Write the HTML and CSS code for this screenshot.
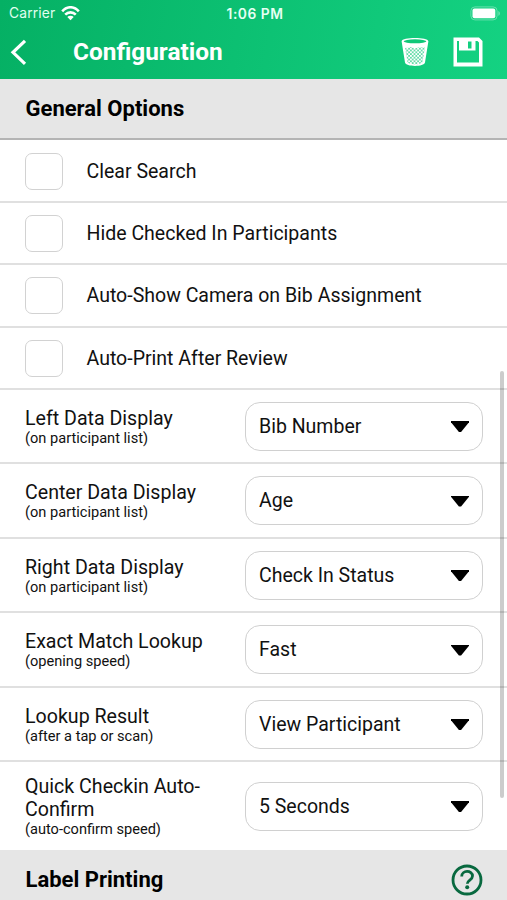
FILE: index.html
```html
<!DOCTYPE html>
<html lang="en">
<head>
<meta charset="utf-8">
<title>Configuration</title>
<link rel="stylesheet" href="styles.css">
</head>
<body>
<div class="screen">
  <header class="header">
    <div class="status">
      <div class="carrier"><span>Carrier</span>
        <svg width="19" height="15" viewBox="0 0 19 15" fill="none" stroke="#fff" stroke-width="2.6"><path d="M1.200 5.300C6-.1 13-.1 17.800 5.300M4.200 8.700c3-3.100 7.600-3.100 10.600 0"/><path d="M9.500 14.200 6.300 10.900c1.700-1.500 4.700-1.500 6.400 0z" fill="#fff" stroke="none"/></svg>
      </div>
      <span class="time">1:06 PM</span>
      <div class="battery">
        <svg width="31" height="15" viewBox="0 0 31 15"><rect x=".9" y=".9" width="26.200" height="13" rx="4" fill="none" stroke="#fff" stroke-opacity=".35"/><rect x="2.500" y="2.500" width="22.800" height="9.800" rx="2" fill="#fff"/><path d="M28.400 5v4.800c2-.8 2-4 0-4.800z" fill="#fff" fill-opacity=".4"/></svg>
      </div>
    </div>
    <div class="nav">
      <svg class="back" width="18" height="28" viewBox="0 0 18 28" fill="none" stroke="#fff" stroke-width="3.200"><path d="M16 1.800 4 13.300l12 11.500"/></svg>
      <h1>Configuration</h1>
      <svg class="trash" width="28" height="30" viewBox="0 0 28 30">
        <defs><pattern id="mesh" width="3.600" height="3.600" patternUnits="userSpaceOnUse"><rect width="3.600" height="3.600" fill="#fff"/><path d="M.9 0 1.800.9.9 1.800 0 .9zM2.700 1.800l.9.9-.9.9-.9-.9z" fill="#0fc878" stroke="#0fc878" stroke-width=".25"/></pattern></defs>
        <path d="M.6 4.200C1-.1 27-.1 27.400 4.200L24 25.500c-.7 4.500-19.300 4.500-20 0z" fill="#fff"/>
        <ellipse cx="14" cy="4.300" rx="11.400" ry="2" fill="#0fc878"/>
        <path d="M4 10.500c2.500 1 4 0 5-.5 4 1.500 7 1.500 10 0 2 .6 3.500.7 5 .2l-2.500 15c-3.500 2.700-11.500 2.700-15 0z" fill="url(#mesh)"/>
      </svg>
      <svg class="save" width="30" height="30" viewBox="0 0 30 30"><path fill="#fff" fill-rule="evenodd" d="M.5.500h25.500l3.500 3.500v25.500H.5zM4 4v21.500h22V5.500L24.500 4H22.500v9.500H6V4zM15 4.500v7h3.500v-7z"/></svg>
    </div>
  </header>
  <main>
    <div class="section"><h2>General Options</h2></div>
    <label class="check first"><input type="checkbox"><span>Clear Search</span></label>
    <label class="check"><input type="checkbox"><span>Hide Checked In Participants</span></label>
    <label class="check"><input type="checkbox"><span>Auto-Show Camera on Bib Assignment</span></label>
    <label class="check"><input type="checkbox"><span>Auto-Print After Review</span></label>
    <div class="option"><div class="label">Left Data Display<small>(on participant list)</small></div><button class="select"><span>Bib Number</span><i class="arrow"></i></button></div>
    <div class="option"><div class="label">Center Data Display<small>(on participant list)</small></div><button class="select"><span>Age</span><i class="arrow"></i></button></div>
    <div class="option"><div class="label">Right Data Display<small>(on participant list)</small></div><button class="select"><span>Check In Status</span><i class="arrow"></i></button></div>
    <div class="option"><div class="label">Exact Match Lookup<small>(opening speed)</small></div><button class="select"><span>Fast</span><i class="arrow"></i></button></div>
    <div class="option"><div class="label">Lookup Result<small>(after a tap or scan)</small></div><button class="select"><span>View Participant</span><i class="arrow"></i></button></div>
    <div class="option last"><div class="label">Quick Checkin Auto-<br>Confirm<small>(auto-confirm speed)</small></div><button class="select"><span>5 Seconds</span><i class="arrow"></i></button></div>
    <div class="section printing"><h2>Label Printing</h2>
      <svg width="32" height="32" viewBox="0 0 32 32" fill="none" stroke="#08693f" stroke-width="2.800"><circle cx="16" cy="16" r="14"/><path d="M10.700 12.500c0-6.800 10.800-6.500 10.800-.4 0 4-5.200 4-5.200 7.700"/><circle cx="16.200" cy="23.300" r="2" fill="#08693f" stroke="none"/></svg>
    </div>
  </main>
  <div class="scrollbar"></div>
</div>
</body>
</html>
```
FILE: styles.css
```css
* { box-sizing: border-box; }
body { margin: 0; font-family: Roboto, sans-serif; color: #111; background: #fff; }
.screen { position: relative; width: 507px; height: 900px; overflow: hidden; }
.header { height: 79px; background: linear-gradient(100deg, #05b064, #14d282); color: #fff; }
.status { display: grid; grid-template-columns: 1fr auto 1fr; align-items: center; height: 26px; padding: 0 6px 0 9px; font: 13.800px Inter, sans-serif; }
.carrier { display: flex; align-items: center; gap: 6px; letter-spacing: .15px; color: #e0fff0; }
.time { padding-top: 1px; font-weight: 600; letter-spacing: .5px; color: #e6fff3; }
.battery { display: flex; justify-content: flex-end; }
.nav { display: flex; align-items: center; height: 53px; padding: 0 24px 0 9px; }
h1 { flex: 1; margin: 0 0 1px 46px; font-size: 24.400px; line-height: 30px; font-weight: 700; }
.trash { margin-right: 24px; }
.nav .trash, .save { margin-bottom: 1px; }
.section { display: flex; align-items: center; justify-content: space-between; height: 61px; padding: 0 24px 0 25.500px; background: #e6e6e6; border-bottom: 2px solid #b4b4b4; }
.printing { height: 63px; }
h2 { margin: 0; font-size: 22px; line-height: 28px; font-weight: 700; color: #000; }
.check { display: flex; align-items: center; gap: 24px; height: 62.200px; padding: 0 25px; border-bottom: 2px solid #e0e0e0; font-size: 19.550px; }
.check.first { height: 63.200px; }
.check input { appearance: none; width: 38px; height: 37px; margin: 1px 0 0; border: 1px solid #d2d2d2; border-radius: 7px; background: #fff; }
.check span { margin: 1px 0 0 -.5px; }
.option { display: flex; align-items: center; justify-content: space-between; height: 74.500px; padding: 0 24px 0 25px; border-bottom: 2px solid #e0e0e0; }
.option.last { height: 87.500px; border: 0; }
.label { padding-top: 1px; font-size: 19.600px; line-height: 23px; }
.last .label { padding: 0; }
small { display: block; font-size: 14.600px; line-height: 17px; }
.select { display: flex; align-items: center; justify-content: space-between; width: 238px; height: 49px; padding: 0 13px; border: 1px solid #d0d0d0; border-radius: 15px; background: #fff; color: #111; font: 19.500px Roboto, sans-serif; }
.arrow { width: 18px; height: 11px; margin-top: 1px; background: #000; clip-path: polygon(0 0, 100% 0, 100% 12%, 56% 100%, 44% 100%, 0 12%); }
.scrollbar { position: absolute; top: 371px; right: 3px; width: 4px; height: 427px; border-radius: 2px; background: rgba(0, 0, 0, .2); }
```
